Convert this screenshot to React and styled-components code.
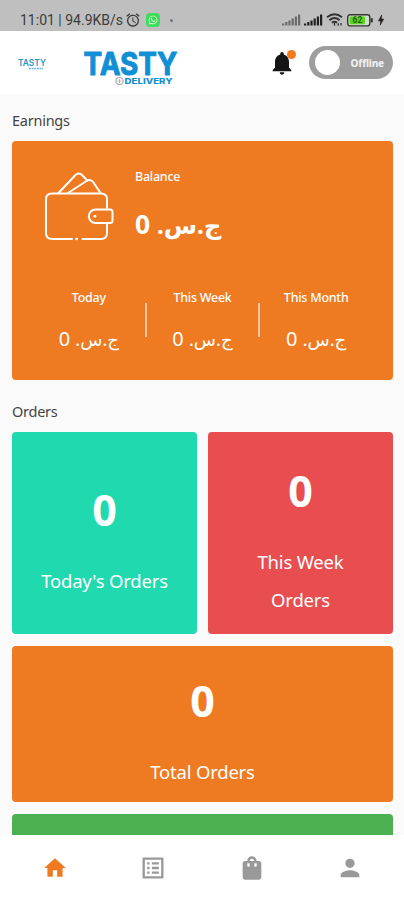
import React from 'react';
import styled, { createGlobalStyle } from 'styled-components';
import {
  MdAlarm,
  MdBolt,
  MdHome,
  MdListAlt,
  MdNotifications,
  MdPerson,
  MdShoppingBag,
} from 'react-icons/md';
import { FaWhatsapp } from 'react-icons/fa';

const GlobalStyle = createGlobalStyle`
  * {
    box-sizing: border-box;
  }
  body {
    margin: 0;
    background: #fafafa;
    font-family: 'Noto Sans', 'DejaVu Sans', sans-serif;
  }
`;

const Screen = styled.div`
  display: flex;
  flex-direction: column;
  width: 404px;
  height: 900px;
  overflow: hidden;
  background: #fafafa;
`;

const StatusBar = styled.div`
  display: flex;
  flex: none;
  align-items: center;
  height: 31px;
  padding: 9px 16px 0 20px;
  background: #bfbfbf;
  color: #3c3c3c;
`;

const Clock = styled.span`
  width: 105px;
  font: 14px/20px Roboto, sans-serif;
  white-space: nowrap;
`;

const WhatsappBadge = styled.span`
  display: flex;
  align-items: center;
  justify-content: center;
  width: 14px;
  height: 14px;
  margin: 0 10px 0 5px;
  border-radius: 4px;
  background: #3ddc5b;
  color: #e9ffe9;
`;

const Dot = styled.span`
  width: 3px;
  height: 3px;
  border-radius: 50%;
  background: #777;
`;

const StatusIcons = styled.div`
  display: flex;
  align-items: center;
  margin-left: auto;
  color: #222;
`;

const Header = styled.header`
  display: flex;
  flex: none;
  align-items: center;
  height: 63px;
  padding: 0 11px 0 18px;
  background: #fff;
`;

const Logo = styled.svg`
  display: block;
  flex: none;
  margin-right: ${(p) => p.$gap || 0}px;
  overflow: visible;
  font-family: Inter, sans-serif;
`;

const BellButton = styled.div`
  position: relative;
  display: flex;
  margin-left: auto;
  color: #151515;
`;

const BellDot = styled.span`
  position: absolute;
  top: 1px;
  right: 0;
  width: 9px;
  height: 9px;
  border-radius: 50%;
  background: #f27a1a;
`;

const Toggle = styled.div`
  display: flex;
  align-items: center;
  justify-content: space-between;
  width: 84px;
  height: 33px;
  margin-left: 13px;
  padding: 0 9px 0 6px;
  border-radius: 17px;
  background: #9e9e9e;
  color: #eee;
  font-size: 10px;
  font-weight: 800;
  letter-spacing: -0.2px;
`;

const Knob = styled.span`
  width: 25px;
  height: 25px;
  border-radius: 50%;
  background: #fff;
`;

const Content = styled.main`
  flex: 1;
  min-height: 0;
  padding: 14px 11px 0 12px;
  overflow: hidden;
`;

const SectionTitle = styled.h2`
  height: 33px;
  margin: 0;
  color: #444;
  font-size: 14.5px;
  font-weight: 400;
  line-height: 24px;
  letter-spacing: -0.25px;
`;

const EarningsCard = styled.section`
  height: 239px;
  margin-bottom: 19px;
  padding-top: 24px;
  border-radius: 4px;
  background: #ee7a22;
  color: #fff;
`;

const Balance = styled.div`
  display: flex;
  height: 98px;
  padding-left: 32px;
`;

const BalanceText = styled.div`
  display: flex;
  flex-direction: column;
  align-items: flex-start;
  gap: 15px;
  margin-left: 21px;
`;

const WalletIcon = styled.svg`
  flex: none;
  margin-top: 7px;
`;

const Caption = styled.span`
  height: 24px;
  font-size: 12.5px;
  font-weight: 500;
  line-height: 24px;
  letter-spacing: -0.25px;
  white-space: nowrap;
`;

const AmountText = styled.span`
  height: 40px;
  font-size: ${(p) => (p.$large ? 26.5 : 20)}px;
  font-weight: ${(p) => (p.$large ? 700 : 400)};
  line-height: 40px;
  white-space: nowrap;
`;

const Currency = styled.span`
  font-size: 0.91em;
  line-height: 1;
`;

const Periods = styled.div`
  display: flex;
  padding: 23px 21px 0;
`;

const Period = styled.div`
  display: flex;
  flex: 1;
  flex-direction: column;
  align-items: center;
  gap: 9px;
`;

const Divider = styled.span`
  width: 2px;
  height: 34px;
  margin-top: 17px;
  background: #f9c79f;
`;

const Orders = styled.section`
  display: grid;
  grid-template-columns: 1fr 1fr;
  grid-template-rows: 202px 156px 157px;
  column-gap: 11px;
  row-gap: 12px;
`;

const OrderCard = styled.div`
  display: flex;
  flex-direction: column;
  align-items: center;
  justify-content: center;
  grid-column: ${(p) => (p.$wide ? '1 / -1' : 'auto')};
  padding: 3px 24px 0;
  border-radius: 4px;
  background: ${(p) => p.$color};
  color: #fff;
`;

const Count = styled.span`
  margin-bottom: 12px;
  font-size: 43px;
  font-weight: 700;
  line-height: 80px;
`;

const OrderLabel = styled.span`
  font-size: 18.5px;
  line-height: 38px;
  letter-spacing: -0.2px;
  text-align: center;
`;

const NavBar = styled.nav`
  display: grid;
  flex: none;
  grid-template-columns: repeat(4, 98.3px);
  height: 65px;
  padding: 0 6px;
  background: #fff;
`;

const NavItem = styled.div`
  display: flex;
  align-items: center;
  justify-content: center;
  color: ${(p) => (p.$active ? '#ee7a22' : '#999')};
`;

const Signal = ({ color }) => (
  <svg width="22" height="12" viewBox="0 0 22 12" fill={color}>
    <rect x="0" y="9.5" width="2.2" height="2" />
    <rect x="3.2" y="8" width="2.2" height="3.5" />
    <rect x="6.4" y="6.5" width="2.2" height="5" />
    <rect x="9.6" y="4.5" width="2.2" height="7" />
    <rect x="12.8" y="2.5" width="2.2" height="9" />
    <rect x="16" y="0.5" width="2.2" height="11" />
  </svg>
);

const Wifi = () => (
  <svg width="21" height="14" viewBox="0 0 21 14" fill="none" stroke="#333" strokeWidth="1.9">
    <path d="M1 4.3Q8.5-1.7 16 4.3" />
    <path d="M3.4 7.2Q8.5 3 13.6 7.2" />
    <path d="M5.9 9.8Q8.5 7.5 11.1 9.8" />
    <path d="M8.5 10v2.7M12.2 10.2v2.6M15 10v2.6" strokeWidth="1.3" />
  </svg>
);

const Battery = () => (
  <svg width="27" height="13" viewBox="0 0 27 13">
    <rect x="0.7" y="0.7" width="22.1" height="11.2" rx="2.4" fill="#d5ddcc" stroke="#333" strokeWidth="1.4" />
    <rect x="2.5" y="2.5" width="15.5" height="7.7" rx="1" fill="#58d61f" />
    <rect x="23.8" y="4" width="2" height="4.6" rx="1" fill="#333" />
    <text x="10.5" y="9.4" fontSize="8.5" fontWeight="700" fontFamily="Roboto, sans-serif" textAnchor="middle" fill="#26610f">
      62
    </text>
  </svg>
);

const Wallet = () => (
  <WalletIcon
    width="70"
    height="71"
    viewBox="0 0 70 71"
    fill="none"
    stroke="#fff"
    strokeWidth="2"
    strokeLinecap="round"
    strokeLinejoin="round"
  >
    <path d="M28 67H8Q2 67 2 61V27Q2 21.5 8 21.5H57Q63 21.5 63 27V37.5M63 51V61Q63 67 57 67H38.5" />
    <path d="M32.5 67h.3" strokeWidth="2.6" />
    <path d="M63 37.5H51.5a6.7 6.7 0 0 0 0 13.4H66q2.5 0 2.5-2.5V40q0-2.5-2.5-2.5z" />
    <path d="M50.8 44.2h.3" strokeWidth="2.6" />
    <path d="M14.5 21L31.5 3q3.2-3 6.3-.3l5.6 6" />
    <path d="M24 21L42.5 9q4-2.5 6.8 1.2L56.5 21" />
  </WalletIcon>
);

const Amount = ({ value, large }) => (
  <AmountText $large={large} dir="rtl">
    <Currency>ج.س.</Currency> {value}
  </AmountText>
);

const periods = ['Today', 'This Week', 'This Month'];

const orders = [
  { label: "Today's Orders", color: '#20d9ae' },
  { label: 'This Week Orders', color: '#e84e50' },
  { label: 'Total Orders', color: '#ee7a22', wide: true },
];

const App = () => (
  <>
    <GlobalStyle />
    <Screen>
      <StatusBar>
        <Clock>11:01 | 94.9KB/s</Clock>
        <MdAlarm size={16} />
        <WhatsappBadge>
          <FaWhatsapp size={10} />
        </WhatsappBadge>
        <Dot />
        <StatusIcons>
          <Signal color="#6b6b6b" />
          <Signal color="#222" />
          <Wifi />
          <Battery />
          <MdBolt size={14} />
        </StatusIcons>
      </StatusBar>

      <Header>
        <Logo width="28" height="16" viewBox="0 0 28 16" $gap={36}>
          <text x="0" y="11" fontSize="9.5" fontWeight="600" textLength="28" lengthAdjust="spacingAndGlyphs" fill="#2594c8">TASTY</text>
          <path d="M11 13.5h14" stroke="#6bb6d9" strokeWidth="1.4" strokeDasharray="2 .6" />
        </Logo>
        <Logo width="98" height="46" viewBox="0 0 98 46">
          <text
            x="1.5"
            y="34.5"
            fontSize="31"
            fontWeight="700"
            textLength="94"
            lengthAdjust="spacingAndGlyphs"
            fill="#118fd5"
            stroke="#118fd5"
            strokeWidth="1"
            strokeLinejoin="round"
          >
            TASTY
          </text>
          <circle cx="37.5" cy="41" r="3.6" fill="none" stroke="#b5b5b5" strokeWidth="1.4" />
          <path d="M35.5 41h4M37.5 39v4" stroke="#b5b5b5" />
          <text x="42.5" y="44" fontSize="7.8" fontWeight="800" textLength="48" lengthAdjust="spacingAndGlyphs" fill="#118fd5">DELIVERY</text>
        </Logo>
        <BellButton>
          <MdNotifications size={28} />
          <BellDot />
        </BellButton>
        <Toggle>
          <Knob />
          Offline
        </Toggle>
      </Header>

      <Content>
        <SectionTitle>Earnings</SectionTitle>
        <EarningsCard>
          <Balance>
            <Wallet />
            <BalanceText>
              <Caption>Balance</Caption>
              <Amount value={0} large />
            </BalanceText>
          </Balance>
          <Periods>
            {periods.map((name, i) => (
              <React.Fragment key={name}>
                {i > 0 && <Divider />}
                <Period>
                  <Caption>{name}</Caption>
                  <Amount value={0} />
                </Period>
              </React.Fragment>
            ))}
          </Periods>
        </EarningsCard>

        <SectionTitle>Orders</SectionTitle>
        <Orders>
          {orders.map(({ label, color, wide }) => (
            <OrderCard key={label} $color={color} $wide={wide}>
              <Count>0</Count>
              <OrderLabel>{label}</OrderLabel>
            </OrderCard>
          ))}
          <OrderCard $color="#4caf50" $wide />
        </Orders>
      </Content>

      <NavBar>
        <NavItem $active>
          <MdHome size={26} />
        </NavItem>
        <NavItem>
          <MdListAlt size={28} />
        </NavItem>
        <NavItem>
          <MdShoppingBag size={28} />
        </NavItem>
        <NavItem>
          <MdPerson size={28} />
        </NavItem>
      </NavBar>
    </Screen>
  </>
);

export default App;
